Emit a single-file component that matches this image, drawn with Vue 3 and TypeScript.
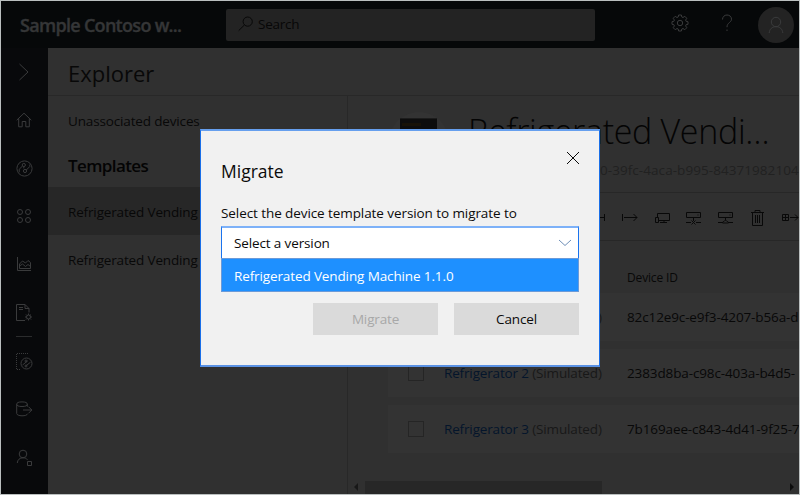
<script setup lang="ts">
interface Device {
  name: string
  id: string
}

const templates: string[] = ['Refrigerated Vending', 'Refrigerated Vending']

const devices: Device[] = [
  { name: 'Refrigerator 1', id: '82c12e9c-e9f3-4207-b56a-d' },
  { name: 'Refrigerator 2', id: '2383d8ba-c98c-403a-b4d5-' },
  { name: 'Refrigerator 3', id: '7b169aee-c843-4d41-9f25-7' },
]
</script>

<template>
  <div class="window">
    <header class="topbar">
      <div class="brand"><span>Sample Contoso w...</span></div>
      <div class="search">
        <svg width="16" height="16" viewBox="0 0 16 16"><circle cx="9.7" cy="5.6" r="4.6" /><path d="M6.4 9 0.7 14.6" /></svg>
        <span>Search</span>
      </div>
      <div class="actions">
        <svg width="18" height="18" viewBox="0 0 18 18">
          <path d="M7.6 1h2.8l.4 2 1.2.5 1.8-1.2 2 2-1.2 1.8.5 1.2 1.9.4v2.6l-1.9.4-.5 1.2 1.2 1.8-2 2-1.8-1.2-1.2.5-.4 2H7.6l-.4-2-1.2-.5-1.8 1.2-2-2 1.2-1.8-.5-1.2-1.9-.4V7.700l1.9-.4.5-1.2-1.2-1.8 2-2L6 3.500l1.200-.5z" />
          <circle cx="9" cy="9" r="2.7" />
        </svg>
        <svg width="12" height="18" viewBox="0 0 12 18"><path d="M1.500 5.500C1.500 2.800 3.500 1 6 1s4.500 1.600 4.500 4.200C10.500 8.500 6 8.500 6 13.200M6 15.500v1.500" /></svg>
        <div class="avatar">
          <svg width="16" height="18" viewBox="0 0 16 18"><circle cx="8" cy="6" r="4.700" /><path d="M1.200 17c.3-4 3-6.300 6.800-6.300s6.500 2.300 6.800 6.300" /></svg>
        </div>
      </div>
    </header>

    <div class="body">
      <nav class="rail">
        <div class="slot"><svg width="18" height="18" viewBox="0 0 18 18"><path d="M4.500 1l8.500 8-8.500 8" /></svg></div>
        <div class="slot"><svg width="16" height="16" viewBox="0 0 16 16"><path d="M.7 8.200 8 1.200l7.300 7M2.700 6.500v8.300h3.500V9.500h3.600v5.300h3.500V6.500" /></svg></div>
        <div class="slot"><svg width="17" height="17" viewBox="0 0 17 17"><circle cx="8.500" cy="8.500" r="7.600" /><circle cx="7.800" cy="5" r="1.600" /><circle cx="9" cy="11" r="1.600" /><path d="M6.500 6 3.200 9.300v3M10.300 10l3.500-3.500v-2M7.800 6.600v1.800" /></svg></div>
        <div class="slot"><svg width="16" height="16" viewBox="0 0 16 16"><circle cx="4" cy="4" r="2.500" /><circle cx="12" cy="4" r="2.500" /><circle cx="4" cy="12" r="2.500" /><circle cx="12" cy="12" r="2.500" /></svg></div>
        <div class="slot"><svg width="16" height="16" viewBox="0 0 16 16"><path d="M1.500 1v13.500H15M3.500 12.500V8l3-3 3 2 2.500-2.500 2.500 2v6zM3.500 10l3-2 3 2.500 2.500-2 2.500 2" /></svg></div>
        <div class="slot"><svg width="17" height="17" viewBox="0 0 17 17"><path d="M9 16.500H.5v-16H9l4 4v4M9 .5v4h4M3 3.500h4M3 5.500h4" /><circle cx="12.500" cy="13" r="2" /><path d="M12.500 9.500v1.500M12.500 15v1.500M9 13h1.500M14.500 13H16M10 10.500l1.200 1.200M15 10.500l-1.200 1.200M10 15.500l1.200-1.200M15 15.500l-1.200-1.200" /></svg></div>
        <div class="divider"></div>
        <div class="slot"><svg width="17" height="17" viewBox="0 0 17 17"><path d="M12 .5H.5v16H5" stroke-dasharray="1 1" /><circle cx="10.500" cy="10.500" r="5.500" /><path d="M6.500 12l5-4M9.500 13.200l5-4" /><circle cx="10" cy="8" r="1" /><circle cx="10" cy="13" r="1" /></svg></div>
        <div class="slot"><svg width="17" height="16" viewBox="0 0 17 16"><ellipse cx="6" cy="3.200" rx="5.300" ry="2.300" /><path d="M.7 3.200v9.300c0 1.300 2.400 2.300 5.300 2.300s5.300-.6 5.300-2M11.300 3.200v2.500M7 9h9M12.500 5.700 15.800 9l-3.300 3.300" /></svg></div>
        <div class="slot"><svg width="17" height="17" viewBox="0 0 17 17"><circle cx="7" cy="5" r="3.800" /><path d="M1.300 14c.2-3.300 2.500-5.200 5.700-5.200 2 0 3.500.7 4.500 2M11.500 12.500h4v4h-4z" /></svg></div>
      </nav>

      <div class="content">
        <div class="page-head"><span>Explorer</span></div>
        <div class="columns">
          <aside class="panel">
            <div class="item">Unassociated devices</div>
            <div class="group"><span>Templates</span></div>
            <div v-for="(t, i) in templates" :key="i" class="item template" :class="{ selected: i === 0 }">{{ t }}</div>
          </aside>

          <main class="main">
            <section class="summary">
              <div class="thumb"><div class="machine"><i></i></div></div>
              <div class="titles">
                <h1>Refrigerated Vendi…</h1>
                <div class="template-id">0-39fc-4aca-b995-84371982104</div>
              </div>
            </section>
            <section class="toolbar">
              <svg width="18" height="18" viewBox="0 0 18 18"><path d="M1 8.500h14M15.500 5v7" /></svg>
              <svg width="18" height="18" viewBox="0 0 18 18"><path d="M1.500 5v7M3 8.500h13M12.500 5 16 8.500 12.500 12" /></svg>
              <svg width="18" height="18" viewBox="0 0 18 18"><path d="M4.500 8V4.500h12v7H6M2.500 8.500h3v5h-3zM11 11.500v2M7 13.500h7" /></svg>
              <svg width="18" height="18" viewBox="0 0 18 18"><path d="M1.500 3.500h14v5h-14zM8.500 8.500V12M1 13.500h5M11 13.500h5M6.500 11.500l4 4M10.500 11.500l-4 4M12.500 6h1" /></svg>
              <svg width="18" height="18" viewBox="0 0 18 18"><path d="M1.500 3.500h14v5h-14zM8.500 8.500V11M1 13.500h5M11 13.500h5M5.500 14c0-1 .5-1.500 1.500-1.500L8.500 11l1.500 1.500c1 0 1.500.5 1.500 1.500zM12.500 6h1" /></svg>
              <svg width="18" height="18" viewBox="0 0 18 18"><path d="M2 3.500h13M6 3.500v-2h5v2M3.500 3.500v13h10v-13M6.500 6v8M8.500 6v8M10.500 6v8" /></svg>
              <svg width="18" height="18" viewBox="0 0 18 18"><path d="M1.500 5.500h6v6h-6zM4.500 5.500v6M1.500 8.500h6M9 8.500h8M14 5.500l3 3-3 3" /></svg>
            </section>
            <section class="grid">
              <div class="grid-head">Device ID</div>
              <div v-for="d in devices" :key="d.id" class="card">
                <span class="check"></span>
                <span class="name"><a>{{ d.name }}</a> (Simulated)</span>
                <span class="device-id">{{ d.id }}</span>
              </div>
            </section>
            <div class="scrollbar"><i class="arrow left"></i><i class="bar"></i><i class="arrow right"></i></div>
          </main>
        </div>
      </div>
    </div>

    <div class="dialog" role="dialog">
      <div class="dialog-head">
        <h2>Migrate</h2>
        <svg width="14" height="14" viewBox="0 0 14 14"><path d="M1 1l12 12M13 1 1 13" /></svg>
      </div>
      <div class="label"><span>Select the device template version to migrate to</span></div>
      <div class="select">
        <span>Select a version</span>
        <svg width="14" height="8" viewBox="0 0 14 8"><path d="M1 1l6 5.500L13 1" /></svg>
      </div>
      <div class="option"><span>Refrigerated Vending Machine 1.1.0</span></div>
      <div class="buttons">
        <button class="disabled" disabled>Migrate</button>
        <button>Cancel</button>
      </div>
    </div>
  </div>
</template>

<style>
body {
  margin: 0;
  overflow: hidden;
}
</style>

<style scoped>
* {
  box-sizing: border-box;
}
.window {
  position: relative;
  width: 800px;
  height: 495px;
  border: 1px solid #babfbf;
  background: #303030;
  font-family: "Open Sans", "Noto Sans", sans-serif;
  font-size: 13.5px;
  letter-spacing: -0.15px;
  color: #080808;
  display: flex;
  flex-direction: column;
  overflow: hidden;
  white-space: nowrap;
}
svg {
  fill: none;
  stroke: currentColor;
  stroke-width: 1;
  flex: none;
  display: block;
}
.topbar {
  height: 47px;
  flex: none;
  background: #060809;
  display: flex;
  align-items: center;
  color: #353637;
}
.brand {
  width: 225px;
  padding-left: 19px;
  font-size: 18px;
  font-weight: 600;
  letter-spacing: -0.7px;
  -webkit-text-stroke: 0.4px currentColor;
}
.search {
  width: 369px;
  height: 32px;
  background: #232323;
  border-radius: 2px;
  color: #070707;
  display: flex;
  align-items: center;
  gap: 4px;
  padding-left: 12px;
}
.search span {
  margin-top: -2px;
  letter-spacing: -0.25px;
}
.search svg {
  margin-top: -2px;
}
.actions {
  flex: 1;
  display: flex;
  align-items: center;
  padding-left: 76px;
  color: #3a3b3c;
}
.actions > svg {
  margin-top: -3px;
}
.actions svg + svg {
  margin-left: 32px;
}
.avatar {
  width: 36px;
  height: 36px;
  margin-left: 25px;
  border-radius: 50%;
  background: #232323;
  display: flex;
  align-items: center;
  justify-content: center;
  color: #3a3b3c;
}
.body {
  flex: 1;
  display: flex;
  min-height: 0;
}
.rail {
  width: 47px;
  background: #08090b;
  color: #3a3b3c;
}
.slot {
  height: 48px;
  display: flex;
  align-items: center;
  justify-content: center;
  padding-right: 1px;
}
.divider {
  height: 1px;
  margin: 0 16px 0 15px;
  background: #2b2c2d;
}
.content {
  flex: 1;
  min-width: 0;
  display: flex;
  flex-direction: column;
}
.page-head {
  height: 48px;
  border-bottom: 1px solid #282828;
  padding-left: 20px;
  font-size: 22px;
  line-height: 51px;
  letter-spacing: 0;
}
.columns {
  flex: 1;
  display: flex;
  min-height: 0;
}
.panel {
  width: 300px;
  border-right: 1px solid #282828;
  padding-top: 1px;
}
.item {
  height: 48px;
  line-height: 48px;
  padding-left: 20px;
}
.item.template {
  line-height: 50px;
}
.item.selected {
  background: #272727;
}
.group {
  height: 42px;
  padding-left: 20px;
  font-size: 17px;
  line-height: 42px;
  font-weight: 600;
  letter-spacing: -0.6px;
  color: #040404;
}
.main {
  flex: 1;
  min-width: 0;
  display: flex;
  flex-direction: column;
}
.summary {
  height: 97px;
  border-bottom: 1px solid #272727;
  display: flex;
  padding: 16px 0 0 41px;
}
.thumb {
  width: 60px;
  height: 60px;
  border-radius: 50%;
  background: #333;
  display: flex;
  overflow: hidden;
}
.machine {
  width: 37px;
  height: 50px;
  margin-top: 6px;
  margin-left: 11px;
  background: #0d0d0d;
  border-top: 1px solid #1c1c1c;
  padding: 4px 2px;
}
.machine i {
  display: block;
  width: 19px;
  height: 3px;
  background: #171208;
}
.titles {
  padding-left: 19px;
}
h1 {
  margin: 0;
  height: 48px;
  font-size: 34px;
  line-height: 38px;
  font-weight: 300;
  letter-spacing: -0.32px;
  color: #040404;
}
.template-id {
  padding-left: 132px;
  line-height: 20px;
  letter-spacing: 0.06px;
  color: #212121;
}
.toolbar {
  height: 48px;
  border-bottom: 1px solid #272727;
  display: flex;
  align-items: center;
  gap: 14px;
  padding: 2px 0 0 241px;
  color: #080808;
}
.grid {
  padding: 20px 0 0 40px;
}
.grid-head {
  height: 32px;
  padding-left: 239px;
  font-size: 12px;
  line-height: 34px;
}
.card {
  height: 48px;
  margin-bottom: 8px;
  background: #333;
  display: flex;
  align-items: center;
  padding-left: 20px;
}
.check {
  flex: none;
  width: 16px;
  height: 16px;
  border: 1px solid #252525;
}
.name {
  flex: none;
  width: 183px;
  margin-left: 20px;
  color: #181818;
}
.name a {
  color: #04152b;
}
.device-id {
  flex: none;
  letter-spacing: -0.12px;
}
.scrollbar {
  margin-top: auto;
  height: 14px;
  display: flex;
  align-items: center;
}
.bar {
  width: 237px;
  height: 13px;
  margin-left: 5px;
  background: #272727;
}
.arrow {
  border: 4px solid transparent;
}
.arrow.left {
  margin-left: 6px;
  margin-right: 2px;
  border-left: 0;
  border-right-color: #181818;
}
.arrow.right {
  margin-left: auto;
  margin-right: 5px;
  border-right: 0;
  border-left-color: #0c0c0c;
}
.dialog {
  position: absolute;
  left: 199px;
  top: 128px;
  width: 400px;
  height: 238px;
  border: 1px solid #1a6fe8;
  border-top: 2px solid #669fee;
  border-bottom: 2px solid #5b92e4;
  background: #f1f1f1;
  color: #0b0b0b;
  padding: 0 20px;
}
.dialog-head {
  height: 72px;
  display: flex;
  justify-content: space-between;
}
h2 {
  margin: 0;
  font-size: 17.5px;
  line-height: 24px;
  padding-top: 28px;
  font-weight: 400;
  letter-spacing: 0;
}
.dialog-head svg {
  margin-top: 20px;
  margin-right: -1px;
}
.label {
  height: 23px;
  line-height: 20px;
  letter-spacing: -0.08px;
}
.select {
  height: 32px;
  border: 1px solid #1a73ee;
  border-top: 2px solid #7db1f8;
  border-bottom: 0;
  background: #fff;
  display: flex;
  align-items: center;
  justify-content: space-between;
  padding: 0 6px 1px 12px;
}
.select span {
  letter-spacing: -0.13px;
}
.select svg {
  color: #6f8fb8;
}
.option {
  height: 34px;
  background: #1e90ff;
  border: 1px solid #6b9ad8;
  color: #fff;
  padding-left: 12px;
  line-height: 34px;
  letter-spacing: -0.12px;
}
.buttons {
  display: flex;
  justify-content: flex-end;
  gap: 16px;
  padding-top: 11px;
}
button {
  width: 125px;
  height: 32px;
  padding: 0;
  border: 0;
  background: #dadada;
  color: #0b0b0b;
  font: inherit;
  letter-spacing: inherit;
}
button.disabled {
  color: #a8a8a8;
}
</style>
